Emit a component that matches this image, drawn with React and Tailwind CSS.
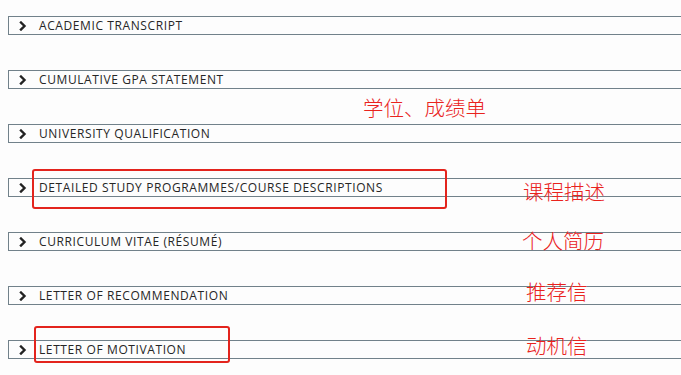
import React from 'react';

const items = [
  'ACADEMIC TRANSCRIPT',
  'CUMULATIVE GPA STATEMENT',
  'UNIVERSITY QUALIFICATION',
  'DETAILED STUDY PROGRAMMES/COURSE DESCRIPTIONS',
  'CURRICULUM VITAE (RÉSUMÉ)',
  'LETTER OF RECOMMENDATION',
  'LETTER OF MOTIVATION'
];

// red handwritten-style notes laid over the list
const notes = [
  { text: '学位、成绩单', cls: 'left-[363px] top-[97px]' },
  { text: '课程描述', cls: 'left-[523px] top-[181px]' },
  { text: '个人简历', cls: 'left-[522px] top-[230px]' },
  { text: '推荐信', cls: 'left-[526px] top-[281px]' },
  { text: '动机信', cls: 'left-[526px] top-[335px]' }
];

function Chevron() {
  return (
    <svg width="8" height="10" viewBox="0 0 8 10" className="shrink-0">
      <path d="M2 1.5 L5.5 5 L2 8.5" fill="none" stroke="#222" strokeWidth="2.4" strokeLinecap="square" />
    </svg>
  );
}

function App() {
  return (
    <div className="relative w-[681px] h-[375px] overflow-hidden bg-[#fdfdfd]" style={{ fontFamily: '"Open Sans", "Liberation Sans", sans-serif' }}>
      <div className="flex flex-col gap-[35px] pt-[16px]">
        {items.map((item) => (
          <div key={item} className="ml-2 w-[700px] h-[19px] border border-[#71818a] flex items-center pl-[10px]">
            <Chevron />
            <span className="ml-[12px] text-[12px] font-medium leading-none tracking-[0.6px] text-[#262626]">{item}</span>
          </div>
        ))}
      </div>

      <div className="absolute left-[32px] top-[169px] w-[415px] h-[40px] border-2 border-[#e3241d] rounded-[3px]" />
      <div className="absolute left-[34px] top-[326px] w-[196px] h-[37px] border-2 border-[#e3241d] rounded-[3px]" />

      {notes.map((n) => (
        <div
          key={n.text}
          className={`absolute ${n.cls} text-[20.5px] leading-none text-[#e9231d]`}
          style={{ fontFamily: '"Noto Sans CJK SC", sans-serif', fontWeight: 300 }}
        >
          {n.text}
        </div>
      ))}
    </div>
  );
}

export default App;
